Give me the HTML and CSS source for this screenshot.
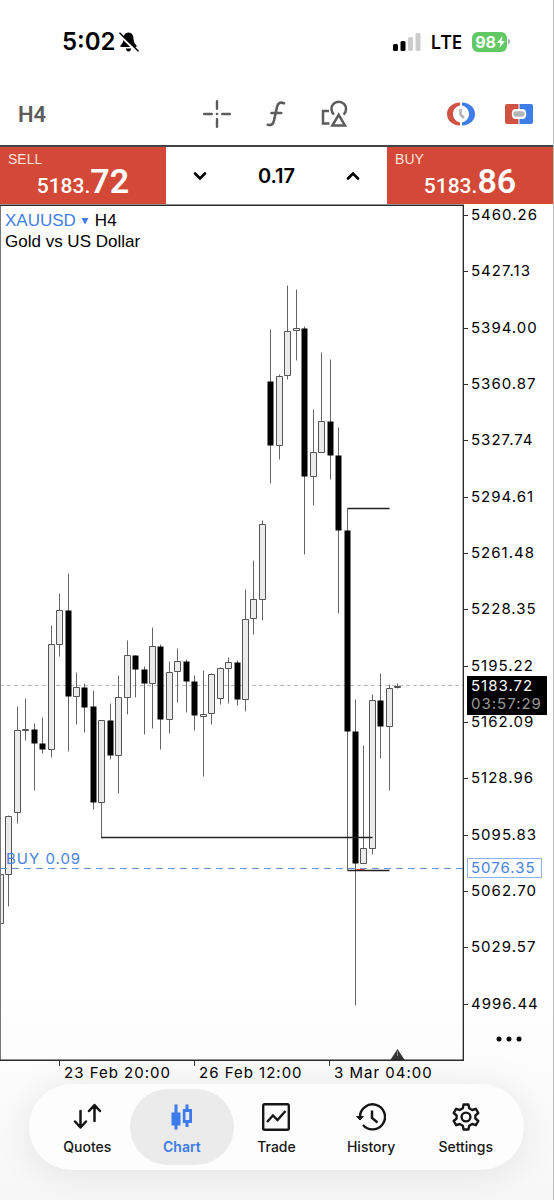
FILE: index.html
```html
<!DOCTYPE html>
<html lang="en">
<head>
<meta charset="utf-8">
<meta name="viewport" content="width=device-width, initial-scale=1">
<title>XAUUSD H4</title>
<link rel="stylesheet" href="styles.css">
</head>
<body>
<div class="app">
  <header class="status">
    <div class="status-left">
      <time class="clock">5:02</time>
      <svg class="bell" viewBox="0 0 20 20" aria-label="Silent">
        <path d="M9.5 0.6C6.3 0.8 4.6 3.200 4.500 6.500C4.400 10 3.500 11.500 1.500 13.600Q0.800 14.700 2 14.900H17Q18.200 14.700 17.500 13.600C15.500 11.500 14.700 10 14.500 6.500C14.300 3.200 12.700 0.800 9.500 0.600ZM6.700 16.600H12.300Q11.800 19.300 9.500 19.400Q7.200 19.300 6.700 16.600Z" fill="#000"/>
        <path d="M0.200 2.400L18.300 20.200" stroke="#fff" stroke-width="2.600"/>
        <path d="M1 1.200L19 18.800" stroke="#000" stroke-width="1.600" stroke-linecap="round"/>
      </svg>
    </div>
    <div class="status-right">
      <svg class="signal" viewBox="0 0 28 18" aria-label="Signal">
        <rect x="0" y="11" width="5" height="7" rx="1.500" fill="#000"/>
        <rect x="7.500" y="8" width="5" height="10" rx="1.500" fill="#000"/>
        <rect x="15" y="4" width="5" height="14" rx="1.500" fill="#ccc"/>
        <rect x="22.500" y="0" width="5" height="18" rx="1.500" fill="#ccc"/>
      </svg>
      <span class="network">LTE</span>
      <span class="battery"><span class="battery-body">98<svg class="bolt" viewBox="0 0 8 12"><path d="M5.500 0L0 7H3.500L2.500 12L8 5H4.500Z" fill="#fff"/></svg></span><span class="battery-nub"></span></span>
    </div>
  </header>

  <div class="toolbar">
    <button class="timeframe">H4</button>
    <div class="tools">
      <button class="icon-btn" aria-label="Crosshair">
        <svg viewBox="0 0 28 28"><path d="M14 1.200V8.800M14 19.200V26.800M1.200 14H8.800M19.200 14H26.800" stroke="#5c5c5c" stroke-width="2.400" stroke-linecap="round"/><circle cx="14" cy="14" r="1.300" fill="#5c5c5c"/></svg>
      </button>
      <button class="icon-btn" aria-label="Indicators">
        <svg viewBox="0 0 28 28"><path d="M22 3.200C18.200 1.600 15.700 3.600 15 7L12 20.500C11.200 24.300 9.200 25.600 5.800 24.800M9.500 13H19.200" fill="none" stroke="#5c5c5c" stroke-width="2.600" stroke-linecap="round"/></svg>
      </button>
      <button class="icon-btn" aria-label="Objects">
        <svg viewBox="0 0 28 28"><path d="M8 11H2V23.500H8.500" fill="none" stroke="#5c5c5c" stroke-width="2.500"/><path d="M13 14.500A7.300 7.300 0 1 1 22.500 14.500" fill="none" stroke="#5c5c5c" stroke-width="2.500"/><path d="M17.700 14.800L24 25.500H11.400Z" fill="none" stroke="#5c5c5c" stroke-width="2.500"/></svg>
      </button>
    </div>
    <div class="tools tools-right">
      <button class="icon-btn" aria-label="Trading sessions">
        <svg viewBox="0 0 28 28"><path d="M13 2.500C5 3 0 7.500 0 14S5 25 13 25.500V22.500C9 21.500 6 18.500 6 14S9 6.500 13 5.500Z" fill="#cf5242"/><path d="M15 2.500C23 3 28 7.500 28 14S23 25 15 25.500V22.500C19 21.500 22 18.500 22 14S19 6.500 15 5.500Z" fill="#3f7eea"/><path d="M13.500 9V14.500L17 18" fill="none" stroke="#b2b5b8" stroke-width="2.600"/></svg>
      </button>
      <button class="icon-btn" aria-label="One click trading">
        <svg viewBox="0 0 28 28"><path d="M13.500 4H2Q0 4 0 6V22Q0 24 2 24H13.500V19H10.500Q6.800 19 6.800 14T10.500 9H13.500Z" fill="#cf5242"/><path d="M14.500 4H26Q28 4 28 6V22Q28 24 26 24H14.500V19H17.500Q21.200 19 21.200 14T17.500 9H14.500Z" fill="#3f7eea"/><rect x="8.300" y="11.200" width="11.400" height="5.600" rx="2.800" fill="#b2b5b8"/></svg>
      </button>
    </div>
  </div>

  <section class="trade-bar">
    <button class="deal"><span class="deal-side">SELL</span><span class="deal-price">5183.<b>72</b></span></button>
    <div class="stepper">
      <button class="step" aria-label="Decrease volume"><svg viewBox="0 0 14 10"><path d="M2 2.500L7 7.500L12 2.500" fill="none" stroke="#000" stroke-width="2.600" stroke-linecap="round"/></svg></button>
      <input class="volume" type="text" value="0.17" aria-label="Volume">
      <button class="step" aria-label="Increase volume"><svg viewBox="0 0 14 10"><path d="M2 7.500L7 2.500L12 7.500" fill="none" stroke="#000" stroke-width="2.600" stroke-linecap="round"/></svg></button>
    </div>
    <button class="deal"><span class="deal-side">BUY</span><span class="deal-price">5183.<b>86</b></span></button>
  </section>

  <main class="chart">
    <div class="plot">
      <div class="symbol">
        <button class="symbol-name">XAUUSD <svg viewBox="0 0 8 8"><path d="M0.500 1H7.500L4 7.500Z" fill="#3e7fe6"/></svg></button><span>H4</span>
        <p class="symbol-desc">Gold vs US Dollar</p>
      </div>
      <svg class="candles" viewBox="0 204 464 857" role="img" aria-label="Candlestick chart">
        <path d="M0 685.500H463" stroke="#bbb" stroke-dasharray="4 3"/>
        <g transform="translate(.5 .5)">
          <path class="wick" d="M8 815V906M17 706V823M25 698V740M34 723V790M42 717V753M51 625V757M59 593V656M68 573V751M76 672V724M84 683V732M93 690V809M101 720V838M110 703V759M118 675V793M127 640V714M135 655V697M144 666V734M152 627V728M160 644V749M169 661V733M177 648V702M186 659V712M194 675V730M203 670V776M211 673V724M220 667V704M228 657V703M237 660V705M245 589V711M253 560V634M262 520V620M270 329V483M279 374V459M287 285V379M296 289V360M304 326V554M313 409V505M321 352V452M330 359V479M338 427V613M347 508V870M355 699V1005M363 745V863M372 694V854M380 673V758M389 684V790M397 683V688"/>
          <path class="bull" d="M-3 874h6v49h-6zM5 816h6v58h-6zM14 730h6v82h-6zM22 729h6v1h-6zM48 644h6v105h-6zM56 610h6v34h-6zM73 687h6v9h-6zM98 720h6v82h-6zM115 697h6v58h-6zM124 655h6v42h-6zM149 646h6v37h-6zM166 672h6v47h-6zM174 661h6v10h-6zM200 714h6v2h-6zM208 674h6v39h-6zM217 668h6v30h-6zM225 662h6v6h-6zM242 619h6v80h-6zM250 599h6v19h-6zM259 524h6v75h-6zM276 376h6v69h-6zM284 331h6v44h-6zM293 328h6v2h-6zM310 452h6v24h-6zM318 421h6v31h-6zM360 848h6v15h-6zM369 700h6v148h-6zM386 688h6v38h-6zM394 686h6v1h-6z"/>
          <path class="bear" d="M31 729h6v14h-6zM39 743h6v6h-6zM65 610h6v86h-6zM81 687h6v20h-6zM90 706h6v96h-6zM107 720h6v35h-6zM132 655h6v14h-6zM141 669h6v14h-6zM157 646h6v73h-6zM183 661h6v20h-6zM191 681h6v34h-6zM234 662h6v37h-6zM267 381h6v64h-6zM301 328h6v148h-6zM327 421h6v34h-6zM335 455h6v75h-6zM344 530h6v201h-6zM352 731h6v132h-6zM377 700h6v26h-6z"/>
          <path d="M101 837H372M347 508H389M347 870H389" stroke="#222" stroke-width="1.300"/>
          <path d="M356 869H364" stroke="#d33" stroke-width="1"/>
        </g>
        <path d="M0 868.500H463" stroke="#6494dc" stroke-dasharray="7 5"/>
        <text class="order" x="6" y="864">BUY 0.09</text>
        <path d="M390 1060.500L397.500 1049L405 1060.500Z" fill="#333"/><path d="M397.500 1051V1056" stroke="#888"/>
        <path d="M0.500 205V1060" stroke="#777"/>
        <path d="M0 205.200H463.400V1060.200H0" fill="none" stroke="#2a2a2a" stroke-width="1.500"/>
      </svg>
    </div>
    <aside class="axis">
      <ul class="prices">
        <li>5460.26</li><li>5427.13</li><li>5394.00</li><li>5360.87</li><li>5327.74</li><li>5294.61</li><li>5261.48</li><li>5228.35</li><li>5195.22</li><li>5162.09</li><li>5128.96</li><li>5095.83</li><li>5062.70</li><li>5029.57</li><li>4996.44</li>
      </ul>
      <button class="more" aria-label="More"><svg viewBox="0 0 26 6"><circle cx="3" cy="3" r="2.500"/><circle cx="13" cy="3" r="2.500"/><circle cx="23" cy="3" r="2.500"/></svg></button>
      <div class="tag tag-last">5183.72<span>03:57:29</span></div>
      <div class="tag tag-order">5076.35</div>
    </aside>
  </main>
  <ul class="times"><li>23 Feb 20:00</li><li>26 Feb 12:00</li><li>3 Mar 04:00</li></ul>

  <nav class="tabs">
    <a class="tab" href="#quotes">
      <svg viewBox="0 0 30 30"><path d="M8.500 9V25M3 19.500L8.500 25.500L14 19.500M22.500 19V3.500M17 9L22.500 3L28 9" fill="none" stroke="#161616" stroke-width="2.500" stroke-linecap="round" stroke-linejoin="round"/></svg>Quotes</a>
    <a class="tab tab-active" href="#chart" aria-current="page">
      <svg viewBox="0 0 30 30"><path d="M7.500 2.500H10.500V10.500H13.500V23.500H10.500V27.500H7.500V23.500H4.500V10.500H7.500ZM18.500 2.500H21.500V7H25V21H21.500V25H18.500V21H15.800V7H18.500ZM18.500 10V18H22.200V10Z" fill="#3b7bec" fill-rule="evenodd"/></svg>Chart</a>
    <a class="tab" href="#trade">
      <svg viewBox="0 0 30 30"><rect x="2.200" y="2.200" width="25.600" height="25.600" rx="1.500" fill="none" stroke="#161616" stroke-width="2.400"/><path d="M6 20L12 13.500L16.500 18L24.500 9" fill="none" stroke="#161616" stroke-width="2.400"/></svg>Trade</a>
    <a class="tab" href="#history">
      <svg viewBox="0 0 30 30"><path d="M4 15A12.500 12.500 0 1 1 7 23" fill="none" stroke="#161616" stroke-width="2.400"/><path d="M0.700 14.500H7.300L4 18Z" fill="#161616" stroke="#161616" stroke-linejoin="round"/><path d="M16 8.500V16L21.500 20.500" fill="none" stroke="#161616" stroke-width="2.500"/></svg>History</a>
    <a class="tab" href="#settings">
      <svg viewBox="0 0 30 30"><path d="M12.600 2.500H17.400L18.200 6.300L21.200 8L24.900 6.800L27.300 11L24.400 13.500V16.500L27.300 19L24.900 23.200L21.200 22L18.200 23.700L17.400 27.500H12.600L11.800 23.700L8.800 22L5.100 23.200L2.700 19L5.600 16.500V13.500L2.700 11L5.100 6.800L8.800 8L11.800 6.300Z" fill="none" stroke="#161616" stroke-width="2.400" stroke-linejoin="round"/><circle cx="15" cy="15" r="4.400" fill="none" stroke="#161616" stroke-width="2.400"/></svg>Settings</a>
  </nav>
</div>
</body>
</html>
```

FILE: styles.css
```css
* { box-sizing: border-box; }
body { margin: 0; background: #fff; color: #000; font-family: Inter, "Liberation Sans", sans-serif; }
button { margin: 0; padding: 0; border: 0; background: none; color: inherit; font: inherit; }
ul { list-style: none; margin: 0; padding: 0; }
svg { display: block; }
.app { min-height: 100vh; display: flex; flex-direction: column; background: linear-gradient(#fff 82%, #f7f7f7); border-right: 1px solid #bbb; }

.status { height: 83px; padding: 0 43px 0 62px; display: flex; justify-content: space-between; align-items: center; }
.status-left, .status-right { display: flex; align-items: center; }
.status-left { gap: 3px; }
.status-right { gap: 10px; }
.clock { font-size: 24px; font-weight: 600; }
.bell { width: 20px; height: 20px; }
.signal { width: 28px; height: 18px; }
.network { font-size: 19px; font-weight: 600; font-family: "Open Sans", sans-serif; line-height: 20px; }
.battery { display: flex; align-items: center; gap: 1px; }
.battery-body { display: flex; align-items: center; gap: 1px; height: 20px; padding: 0 2px 0 3px; border-radius: 6px; background: #60c963; color: #fff; font-size: 16px; font-weight: 700; }
.bolt { width: 8px; height: 12px; }
.battery-nub { width: 2px; height: 5px; border-radius: 0 2px 2px 0; background: #aaa; }

.toolbar { height: 62px; padding: 0 20px 0 18px; display: grid; grid-template-columns: 1fr auto 1fr; align-items: center; }
.timeframe { justify-self: start; font-family: Roboto, sans-serif; font-size: 22px; font-weight: 600; color: #5c5c5c; }
.tools { display: flex; gap: 31px; }
.tools-right { justify-self: end; gap: 30px; }
.icon-btn, .icon-btn svg { width: 28px; height: 28px; }

.trade-bar { display: grid; grid-template-columns: 3fr 4fr 3fr; height: 59px; border-top: 2px solid #444; }
.deal { display: flex; flex-direction: column; background: #d34836; color: #fff; padding: 4px 8px 0; font-family: Roboto, sans-serif; }
.deal-side { align-self: flex-start; font-family: "Liberation Sans", sans-serif; font-size: 14px; line-height: 16px; color: #fbe3df; }
.deal-price { align-self: center; font-size: 21px; line-height: 28px; font-weight: 500; }
.deal-price b { font-size: 34px; font-weight: 600; }
.stepper { display: flex; align-items: center; justify-content: space-between; padding: 0 27px; background: #fff; }
.step { display: flex; }
.step svg { width: 14px; height: 10px; }
.volume { width: 60px; padding: 0; border: 0; background: none; text-align: center; font-family: inherit; font-size: 20px; font-weight: 600; color: #000; }

.chart { display: grid; grid-template-columns: minmax(0, 1fr) 89px; }
.plot { position: relative; }
.candles { width: 100%; height: auto; }
.wick { fill: none; stroke: #666; }
.bull { fill: #ebebeb; stroke: #555; }
.bear { fill: #000; }
.order { font-family: Inter, sans-serif; font-size: 15px; letter-spacing: 1px; fill: #4a83e0; }
.symbol { position: absolute; top: 6px; left: 5px; font-family: "Liberation Sans", sans-serif; font-size: 17px; line-height: 21px; }
.symbol-name { display: inline-flex; align-items: center; gap: 5px; margin-right: 6px; color: #3e7fe6; }
.symbol-name svg { width: 8px; height: 8px; }
.symbol-desc { margin: 0; }

.axis { position: relative; display: flex; flex-direction: column; font-size: 15px; letter-spacing: 1px; }
.prices { flex: 1; padding-top: 2px; display: flex; flex-direction: column; justify-content: space-between; }
.prices li { line-height: 18px; padding-left: 7px; background: linear-gradient(#333, #333) no-repeat 0 9px / 4px 1px; }
.more { height: 48px; padding-top: 3px; display: flex; align-items: center; justify-content: center; }
.more svg { width: 26px; height: 6px; }
.tag { position: absolute; left: 3px; padding: 0 4px; line-height: 18px; }
.tag-last { top: 55%; margin-top: 1px; width: 80px; height: 39px; padding-top: 1px; background: #000; color: #fff; }
.tag-last span { display: block; color: #999; }
.tag-order { top: 76%; margin-top: 3px; width: 75px; border: 1px solid #8db3ef; background: #fff; color: #4a83e0; padding-left: 3px; }

.times { display: flex; padding-left: 59px; height: 23px; font-size: 15px; letter-spacing: 1px; }
.times li { flex: 0 0 135px; padding-left: 5px; line-height: 23px; white-space: nowrap; background: linear-gradient(#333, #333) no-repeat 0 0 / 1px 5px; }

.tabs { margin: 0 29px 30px; padding: 5px 11px; display: flex; border-radius: 43px; background: #fdfdfd; box-shadow: 0 4px 40px rgba(0, 0, 0, .09); }
.tab { flex: 0 0 20%; height: 76px; padding-top: 13px; display: flex; flex-direction: column; align-items: center; gap: 6px; color: #161616; font-size: 14px; line-height: 18px; font-weight: 500; text-decoration: none; }
.tab svg { width: 30px; height: 30px; }
.tab-active { flex-basis: calc(20% + 10px); margin: 0 -5px; border-radius: 38px; background: #ebebeb; color: #3b7bec; font-weight: 600; }
```
